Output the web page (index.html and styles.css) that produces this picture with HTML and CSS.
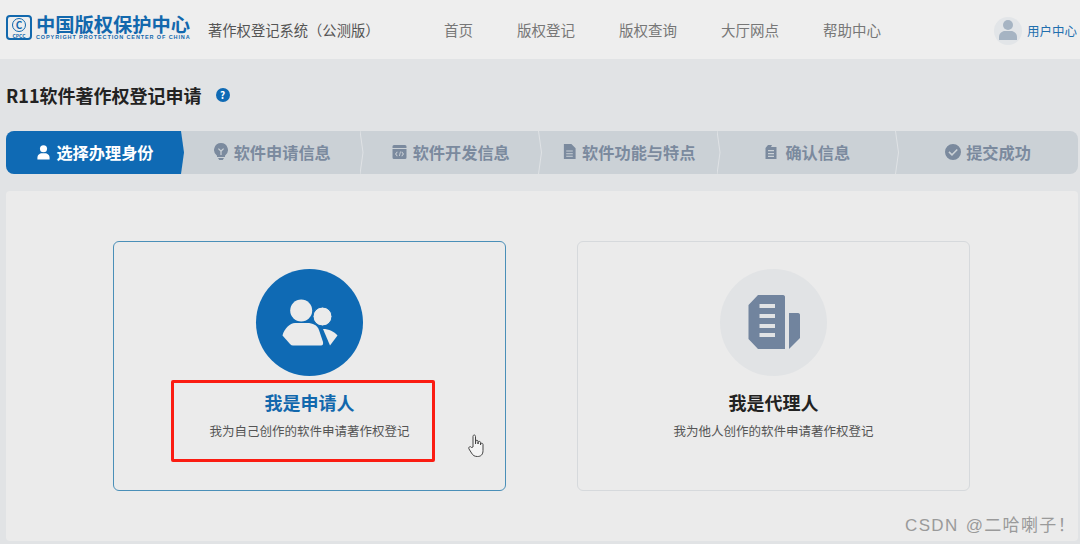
FILE: index.html
```html
<!DOCTYPE html>
<html lang="zh-CN">
<head>
    <meta charset="UTF-8">
    <meta name="viewport" content="width=device-width, initial-scale=1.0">
    <title>R11软件著作权登记申请</title>
    <link rel="stylesheet" href="styles.css">
</head>
<body>
    <!-- Header -->
    <header class="header">
        <div class="logo">
            <div class="logo-mark">
                <span class="logo-c">C</span>
                <span class="logo-abbr">CPCC</span>
            </div>
            <div class="logo-text">
                <div class="logo-cn">中国版权保护中心</div>
                <div class="logo-en">COPYRIGHT PROTECTION CENTER OF CHINA</div>
            </div>
        </div>
        <div class="system-name">著作权登记系统（公测版）</div>
        <nav class="nav">
            <a>首页</a>
            <a>版权登记</a>
            <a>版权查询</a>
            <a>大厅网点</a>
            <a>帮助中心</a>
        </nav>
        <div class="user">
            <div class="avatar">
                <svg width="20" height="22" viewBox="0 0 20 22"><circle cx="10" cy="6" r="5"/><path d="M1 21v-3c0-3.500 3-6 6-6h6c3 0 6 2.500 6 6v3z"/></svg>
            </div>
            <span>用户中心</span>
        </div>
    </header>

    <div class="page-title">
        <h1>R11软件著作权登记申请</h1>
        <span class="help">?</span>
    </div>

    <!-- Steps -->
    <div class="steps">
        <div class="step active">
            <svg width="15" height="16" viewBox="0 0 16 16"><circle cx="8" cy="4.500" r="3.800"/><path d="M1.500 16v-2c0-3 2.500-4.800 4.800-4.800h3.400c2.300 0 4.800 1.800 4.800 4.800v2z"/></svg>
            选择办理身份
        </div>
        <div class="step">
            <svg width="16" height="17" viewBox="0 0 16 17"><path fill-rule="evenodd" d="M8 0a7 7 0 0 1 4 12.700V14H4v-1.300A7 7 0 0 1 8 0zM5 6l2.400 2.400V12h1.200V8.400L11 6l-.8-.8L8 7.300 5.800 5.200z"/><path d="M5 15h6l-1.200 2H6.200z"/></svg>
            软件申请信息
        </div>
        <div class="step">
            <svg width="17" height="16" viewBox="0 0 16 16"><path fill-rule="evenodd" d="M2.500 1h11A1.500 1.500 0 0 1 15 2.500V4H1V2.500A1.500 1.500 0 0 1 2.500 1zM1 5h14v8.500a1.500 1.500 0 0 1-1.500 1.500h-11A1.500 1.500 0 0 1 1 13.500zm4.500 2.500L3.500 10l2 2.500.7-.6L4.700 10l1.500-1.900zm5 0-.7.6 1.500 1.900-1.500 1.900.7.6 2-2.500zm-3 4.500h.9l1-4.500h-.9z"/></svg>
            软件开发信息
        </div>
        <div class="step">
            <svg width="15" height="17" viewBox="0 0 16 16"><path fill-rule="evenodd" d="M2 0h8l4.500 4.500V16H2zM4.500 7v1h7V7zm0 2.800v1h7v-1zm0 2.700v1h7v-1z"/></svg>
            软件功能与特点
        </div>
        <div class="step step-wide">
            <svg width="14" height="16" viewBox="0 0 14 16"><path fill-rule="evenodd" d="M4 1h4L7 3h5.500v12H1.500V4zM4 6v1.300h6V6zm0 3v1.300h6V9zm0 2.800v1.300h6v-1.300z"/></svg>
            确认信息
        </div>
        <div class="step">
            <svg width="16" height="16" viewBox="0 0 16 16"><path fill-rule="evenodd" d="M8 0a8 8 0 1 1 0 16A8 8 0 0 1 8 0zm3.700 5L7 9.700 4.500 7.300 3.400 8.400 7 12l5.800-5.900z"/></svg>
            提交成功
        </div>
    </div>

    <!-- Identity cards -->
    <main class="panel">
        <div class="card selected">
            <div class="circle">
                <svg width="58" height="48" viewBox="0 0 58 48"><circle cx="20.200" cy="11.500" r="11"/><circle class="ring" cx="41.500" cy="17.500" r="9.500"/><path d="M1.500 36.500C3 30 9 24 14 24h12c6 0 10 2 12 7l4 12q.5 3.500-2 3.500H12c-1 0-2-.5-3-1.500z"/><path d="M42 30c6 0 11 2.500 14.500 6.500L49 46.500z"/></svg>
            </div>
            <div class="card-title">我是申请人</div>
            <div class="card-desc">我为自己创作的软件申请著作权登记</div>
            <div class="highlight"></div>
            <svg class="pointer" width="17" height="24" viewBox="0 0 17 24"><path d="M5 13V2.500c0-2 2.500-2 2.500 0V10l.2-2.500c0-1.700 2.300-1.700 2.300 0V10l.2-1.500c0-1.500 2.300-1.500 2.300 0V11l.2-1c.2-1.300 2.300-1 2.300.500v6c0 4-2 6-5.500 6-3 0-4.500-1-6-3.500L1 15c-1-2 1.500-3.300 2.500-1.500z"/></svg>
        </div>
        <div class="card">
            <div class="circle">
                <svg width="54" height="56" viewBox="0 0 54 56"><path fill-rule="evenodd" d="M11 0h25c1.500 0 2 1 2 2v52H11L1.500 44V10zM12.500 9v4H28V9zm0 10v4H28v-4zm0 10v4H28v-4zm0 9v4H28v-4z"/><path d="M42 18h9c1.500 0 2 1 2 2v23L42 54z"/></svg>
            </div>
            <div class="card-title">我是代理人</div>
            <div class="card-desc">我为他人创作的软件申请著作权登记</div>
        </div>
    </main>

    <div class="watermark">CSDN @二哈喇子！</div>
</body>
</html>
```

FILE: styles.css
```css
* {
    box-sizing: border-box;
}
body {
    font-family: "Noto Sans CJK SC", "Noto Sans", sans-serif;
    background-color: #e1e3e5;
    margin: 0;
    padding: 0;
    height: 544px;
    overflow: hidden;
    position: relative;
}
.header {
    display: flex;
    align-items: center;
    height: 59px;
    padding: 0 3px 0 6px;
    background-color: #eeeeee;
}
.logo {
    display: flex;
    align-items: center;
    gap: 4px;
    width: 202px;
    margin-bottom: 5px;
    color: #1268ad;
}
.logo-mark {
    position: relative;
    width: 26px;
    height: 25px;
    border: 2px solid #1268ad;
    border-radius: 4px;
}
.logo-c {
    position: absolute;
    top: 1px;
    left: 4px;
    width: 14px;
    height: 14px;
    border: 1.500px solid #1268ad;
    border-radius: 50%;
    font-size: 10px;
    font-weight: 700;
    line-height: 11px;
    text-align: center;
}
.logo-abbr {
    position: absolute;
    left: 0;
    right: 0;
    bottom: -1px;
    font-size: 5px;
    font-weight: 700;
    line-height: 6px;
    text-align: center;
}
.logo-cn {
    font-size: 19.250px;
    font-weight: 700;
    line-height: 20px;
    white-space: nowrap;
}
.logo-en {
    font-size: 5.500px;
    font-weight: 700;
    line-height: 7px;
    white-space: nowrap;
    font-family: "Liberation Sans", sans-serif;
    letter-spacing: 0.890px;
}
.system-name {
    width: 168px;
    font-size: 14.300px;
    color: #555555;
    white-space: nowrap;
}
.nav {
    display: flex;
    gap: 44px;
    margin-left: 68px;
    font-size: 14.500px;
    color: #777777;
}
.user {
    display: flex;
    align-items: center;
    gap: 5px;
    margin-left: auto;
    padding-top: 2px;
    font-size: 12.500px;
    color: #1f6fae;
}
.avatar {
    display: flex;
    align-items: flex-end;
    justify-content: center;
    width: 28px;
    height: 28px;
    padding-bottom: 4px;
    border-radius: 50%;
    background-color: #e2e5e8;
}
.avatar svg {
    fill: #a6b4c3;
}
.page-title {
    display: flex;
    align-items: center;
    gap: 14px;
    height: 72px;
    padding-left: 6px;
}
.page-title h1 {
    margin: 0;
    font-size: 18px;
    font-weight: 700;
    color: #222222;
}
.help {
    width: 14px;
    height: 14px;
    border-radius: 50%;
    background-color: #0f6ab4;
    color: white;
    font-size: 10px;
    font-weight: 700;
    line-height: 14px;
    text-align: center;
}
.steps {
    display: grid;
    grid-template-columns: 175px repeat(4, 1fr) 183px;
    height: 43px;
    margin: 0 2px 0 6px;
    border-radius: 8px;
    overflow: hidden;
    background-color: #cbd1d6;
}
.step {
    position: relative;
    display: flex;
    align-items: center;
    justify-content: center;
    gap: 5px;
    padding: 0 0 2px 3px;
    font-size: 16.200px;
    font-weight: 700;
    color: #7b8a9e;
}
.step svg {
    fill: #7b8a9e;
}
.step-wide {
    gap: 7px;
}
.step::after {
    content: "";
    position: absolute;
    top: 0;
    bottom: 0;
    right: -4px;
    width: 4px;
    background-color: #dfe2e5;
    clip-path: polygon(0 0, 1px 0, 4px 50%, 1px 100%, 0 100%, 3px 50%);
    z-index: 1;
}
.step:last-child::after {
    display: none;
}
.step.active {
    background-color: #0f6ab4;
    color: white;
}
.step.active svg {
    fill: white;
}
.step.active::after {
    right: -3px;
    width: 3px;
    background-color: #0f6ab4;
    clip-path: polygon(0 0, 100% 50%, 0 100%);
}
.panel {
    display: flex;
    gap: 71px;
    height: 350px;
    margin: 17px 2px 0 6px;
    padding: 50px 0 0 107px;
    background-color: #ebebeb;
    border-radius: 4px;
}
.card {
    position: relative;
    display: flex;
    flex-direction: column;
    align-items: center;
    width: 393px;
    height: 250px;
    padding-top: 27px;
    border: 1px solid #d6d9dc;
    border-radius: 6px;
}
.card.selected {
    border-color: #4a8fb8;
}
.circle {
    display: flex;
    align-items: center;
    justify-content: center;
    width: 107px;
    height: 107px;
    border-radius: 50%;
    background-color: #e1e3e5;
}
.circle svg {
    fill: #71849e;
}
.selected .circle {
    background-color: #0f6ab4;
}
.selected .circle svg {
    fill: #ebebeb;
}
.selected .circle .ring {
    stroke: #0f6ab4;
    stroke-width: 1;
}
.card-title {
    margin-top: 13px;
    font-size: 18px;
    font-weight: 700;
    line-height: 26px;
    color: #222222;
}
.selected .card-title {
    color: #1268ad;
}
.card-desc {
    margin-top: 7px;
    font-size: 12.500px;
    line-height: 18px;
    color: #555555;
}
.highlight {
    position: absolute;
    left: 57px;
    top: 138px;
    width: 264px;
    height: 82px;
    border: 3px solid #fb1c12;
    border-radius: 2px;
}
.pointer {
    position: absolute;
    left: 354px;
    top: 192px;
    fill: #f4f4f4;
    stroke: #444444;
    stroke-width: 1;
}
.watermark {
    position: absolute;
    right: 4px;
    top: 514px;
    font-family: "Liberation Sans", "Noto Sans CJK SC", sans-serif;
    font-size: 17px;
    letter-spacing: 1.350px;
    word-spacing: 1px;
    line-height: 24px;
    color: #9a9a9a;
}
```
